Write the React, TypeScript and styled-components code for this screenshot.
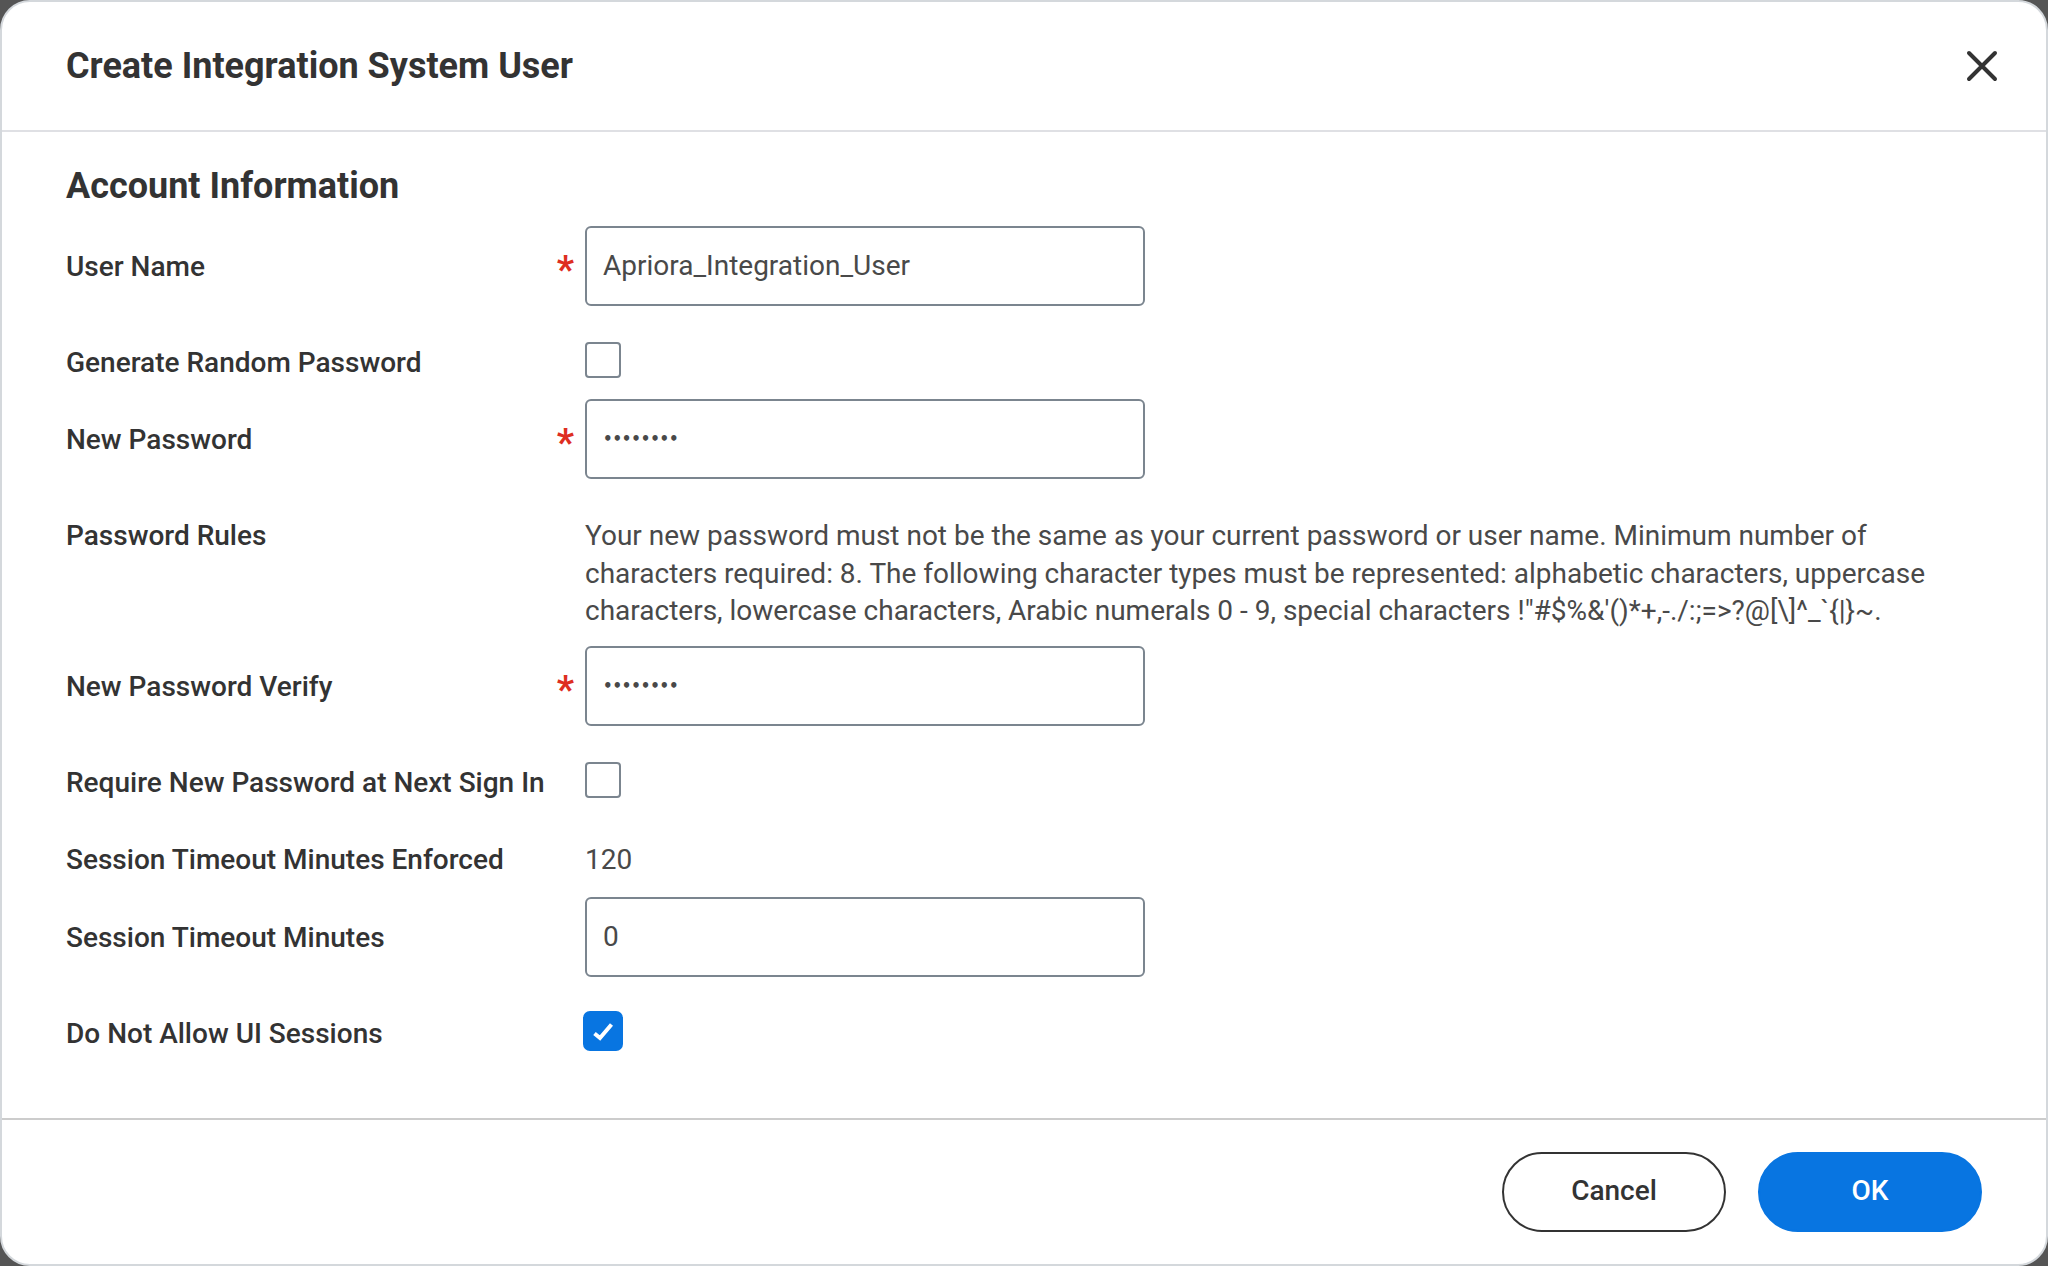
import React from "react";
import styled, { createGlobalStyle } from "styled-components";

const Global = createGlobalStyle`
  html, body { margin: 0; padding: 0; height: 100%; background: #555555; overflow: hidden; }
  * { box-sizing: border-box; }
`;

const Dialog = styled.div`
  width: 2048px;
  height: 1266px;
  background: #fff;
  border: 2px solid #d4d8dc;
  border-radius: 30px;
  display: flex;
  flex-direction: column;
  font-family: Roboto, "Liberation Sans", sans-serif;
  color: #333333;
  overflow: hidden;
`;

const Header = styled.header`
  height: 130px;
  flex: none;
  display: flex;
  align-items: center;
  justify-content: space-between;
  padding: 0 48px 0 64px;
  border-bottom: 2px solid #dfe0e4;
`;

const Title = styled.h1`
  margin: 0;
  font-size: 36px;
  font-weight: 700;
`;

const CloseButton = styled.button`
  width: 32px;
  height: 32px;
  padding: 0;
  border: 0;
  background: none;
  color: #333333;
  display: flex;
`;

const Body = styled.main`
  flex: 1;
  padding: 32px 64px 0;
`;

const SectionTitle = styled.h2`
  margin: 0 0 18px;
  font-size: 36px;
  line-height: 44px;
  font-weight: 700;
`;

const Row = styled.div<{ $after: number }>`
  display: grid;
  grid-template-columns: 519px 1fr;
  align-items: start;
  margin-bottom: ${(p) => p.$after}px;
`;

const LabelCell = styled.div<{ $offset: number }>`
  display: flex;
  justify-content: space-between;
  align-items: center;
  margin-top: ${(p) => p.$offset}px;
  padding-right: 11px;
  font-size: 28px;
  line-height: 38px;
  font-weight: 500;
`;

const Star = styled.span`
  color: #de2e21;
  font-size: 38px;
  line-height: 38px;
  font-weight: 700;
  height: 38px;
  padding-top: 3px;
`;

const Input = styled.div`
  width: 560px;
  height: 80px;
  border: 2px solid #7b858f;
  border-radius: 6px;
  padding: 0 16px 1px;
  display: flex;
  align-items: center;
  font-size: 28px;
  color: #494949;
`;

const Dots = styled.span`
  font-family: "DejaVu Sans", sans-serif;
  font-size: 15px;
  letter-spacing: -0.15px;
  font-weight: 700;
`;

const Checkbox = styled.div<{ $checked?: boolean }>`
  width: ${(p) => (p.$checked ? 40 : 36)}px;
  height: ${(p) => (p.$checked ? 40 : 36)}px;
  margin-left: ${(p) => (p.$checked ? -2 : 0)}px;
  border: ${(p) => (p.$checked ? "0" : "2px solid #7b858f")};
  border-radius: ${(p) => (p.$checked ? 7 : 4)}px;
  background: ${(p) => (p.$checked ? "#0875e1" : "#fff")};
  display: flex;
  align-items: center;
  justify-content: center;
`;

const Paragraph = styled.p`
  margin: 0;
  font-size: 28px;
  line-height: 37.5px;
  color: #494949;
  width: 1380px;
`;

const StaticValue = styled.div`
  margin-top: 1px;
  font-size: 28px;
  line-height: 38px;
  color: #494949;
`;

const Footer = styled.footer`
  flex: none;
  height: 146px;
  border-top: 2px solid #cccccc;
  display: flex;
  justify-content: flex-end;
  align-items: flex-start;
  gap: 32px;
  padding: 32px 64px 0 0;
`;

const Button = styled.button<{ $primary?: boolean }>`
  width: 224px;
  height: 80px;
  padding: 0 0 3px;
  border-radius: 40px;
  border: 2px solid ${(p) => (p.$primary ? "#0875e1" : "#333333")};
  background: ${(p) => (p.$primary ? "#0875e1" : "#fff")};
  color: ${(p) => (p.$primary ? "#fff" : "#333333")};
  font-family: inherit;
  font-size: 28px;
  font-weight: 500;
`;

export default function App() {
  return (
    <Dialog>
      <Global />
      <Header>
        <Title>Create Integration System User</Title>
        <CloseButton aria-label="Close">
          <svg width="32" height="32" viewBox="0 0 32 32" fill="none" stroke="currentColor" strokeWidth="4" strokeLinecap="round">
            <path d="M3 3 L29 29 M29 3 L3 29" />
          </svg>
        </CloseButton>
      </Header>
      <Body>
        <SectionTitle>Account Information</SectionTitle>
        <Row $after={36}>
          <LabelCell $offset={22}>User Name<Star>*</Star></LabelCell>
          <Input>Apriora_Integration_User</Input>
        </Row>
        <Row $after={17}>
          <LabelCell $offset={2}>Generate Random Password</LabelCell>
          <Checkbox />
        </Row>
        <Row $after={38}>
          <LabelCell $offset={22}>New Password<Star>*</Star></LabelCell>
          <Input><Dots>••••••••</Dots></Input>
        </Row>
        <Row $after={16.5}>
          <LabelCell $offset={0}>Password Rules</LabelCell>
          <Paragraph>
            Your new password must not be the same as your current password or user name. Minimum number of characters required: 8. The following character types must be represented: alphabetic characters, uppercase characters, lowercase characters, Arabic numerals 0 - 9, special characters !"#$%&amp;'()*+,-./:;=&gt;?@[\]^_`{"{"}|{"}"}~.
          </Paragraph>
        </Row>
        <Row $after={36}>
          <LabelCell $offset={22}>New Password Verify<Star>*</Star></LabelCell>
          <Input><Dots>••••••••</Dots></Input>
        </Row>
        <Row $after={38}>
          <LabelCell $offset={2}>Require New Password at Next Sign In</LabelCell>
          <Checkbox />
        </Row>
        <Row $after={18}>
          <LabelCell $offset={1}>Session Timeout Minutes Enforced</LabelCell>
          <StaticValue>120</StaticValue>
        </Row>
        <Row $after={34}>
          <LabelCell $offset={22}>Session Timeout Minutes</LabelCell>
          <Input>0</Input>
        </Row>
        <Row $after={0}>
          <LabelCell $offset={4}>Do Not Allow UI Sessions</LabelCell>
          <Checkbox $checked>
            <svg width="24" height="24" viewBox="0 0 24 24" fill="none" stroke="#fff" strokeWidth="4" strokeLinecap="butt">
              <path d="M3.5 14.5 L9 19 L20.5 5.5" />
            </svg>
          </Checkbox>
        </Row>
      </Body>
      <Footer>
        <Button>Cancel</Button>
        <Button $primary>OK</Button>
      </Footer>
    </Dialog>
  );
}
